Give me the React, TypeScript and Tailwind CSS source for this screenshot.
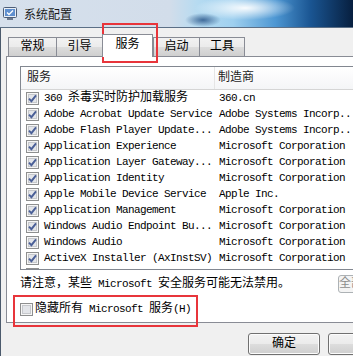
import React from "react";

interface Service {
  name: string;
  maker: string;
}

const services: Service[] = [
  { name: "360 杀毒实时防护加载服务", maker: "360.cn" },
  { name: "Adobe Acrobat Update Service", maker: "Adobe Systems Incorp.." },
  { name: "Adobe Flash Player Update...", maker: "Adobe Systems Incorp.." },
  { name: "Application Experience", maker: "Microsoft Corporation" },
  { name: "Application Layer Gateway...", maker: "Microsoft Corporation" },
  { name: "Application Identity", maker: "Microsoft Corporation" },
  { name: "Apple Mobile Device Service", maker: "Apple Inc." },
  { name: "Application Management", maker: "Microsoft Corporation" },
  { name: "Windows Audio Endpoint Bu...", maker: "Microsoft Corporation" },
  { name: "Windows Audio", maker: "Microsoft Corporation" },
  { name: "ActiveX Installer (AxInstSV)", maker: "Microsoft Corporation" },
];

const tabs = ["常规", "引导", "服务", "启动", "工具"];

// SimSun-like mix: ascii runs are 6px per char, CJK runs 12px
const Mixed = ({ text }: { text: string }) => (
  <>
    {text.split(/([\u3000-\u303f\u4e00-\u9fff\uff00-\uffef]+)/).map((part, i) =>
      /[\u3000-\u303f\u4e00-\u9fff\uff00-\uffef]/.test(part) ? (
        <span key={i} className="text-[12px] tracking-normal">
          {part}
        </span>
      ) : (
        <span key={i}>{part}</span>
      )
    )}
  </>
);

const CheckBox = ({ checked }: { checked: boolean }) => (
  <svg width="13" height="13" viewBox="0 0 13 13" className="shrink-0">
    <rect x="0.5" y="0.5" width="12" height="12" fill="#f6f6f6" stroke="#8e8f8f" />
    <rect x="2.5" y="2.5" width="8" height="8" fill="#e3e5e9" stroke="#c6c8cc" />
    {checked && (
      <path d="M3 6.6 L5.4 9.2 L10 3.4" fill="none" stroke="#4a5f97" strokeWidth="1.9" />
    )}
  </svg>
);

const AppIcon = () => (
  <svg width="14" height="13" viewBox="0 0 14 13">
    <rect x="0.5" y="0.5" width="13" height="10" rx="1" fill="#e8eef6" stroke="#4d5e78" />
    <rect x="2" y="2" width="10" height="7" fill="#5f8fcf" />
    <path d="M4 5.5 L6 7.5 L10 3.5" fill="none" stroke="#ffffff" strokeWidth="1.3" />
    <rect x="4" y="11" width="6" height="2" fill="#6b7a90" />
  </svg>
);

const winButton =
  "h-[22px] rounded-[3px] border border-[#707070] bg-[linear-gradient(to_bottom,#f2f2f2_0%,#ebebeb_50%,#dddddd_50%,#cfcfcf_100%)] shadow-[inset_0_0_0_1px_#fcfcfc] flex items-center justify-center shrink-0";

export default function App() {
  return (
    <div className="w-[353px] h-[356px] relative overflow-hidden bg-[#f0f0f0] text-black font-['Liberation_Mono','Noto_Sans_CJK_SC',monospace] text-[11px] tracking-[-0.6px]">
      {/* title bar */}
      <div className="h-[28px] flex items-center pl-[3px] gap-[7px] border-b border-[#5b6f86] bg-[radial-gradient(ellipse_50px_12px_at_245px_8px,rgba(255,255,255,0.95),rgba(255,255,255,0)),radial-gradient(ellipse_18px_7px_at_203px_20px,rgba(25,70,125,0.75),rgba(25,70,125,0)),linear-gradient(to_right,#d6e0ec_0%,#d2ddea_48%,#b6dbf1_56%,#9fd0ef_66%,#4d97d3_78%,#1a5592_88%,#071f3f_100%)]">
        <AppIcon />
        <span className="text-[12px] tracking-normal text-[#1a1a1a] font-['Noto_Sans_CJK_SC',sans-serif]">
          系统配置
        </span>
      </div>

      <div className="flex h-[328px]">
        {/* window frame */}
        <div className="w-[3px] bg-[#c7d4e3] border-r border-[#4b5a6c]" />

        <div className="flex-1 flex flex-col">
          {/* tab strip */}
          <div className="h-[28px] flex items-end pl-[7px]">
            {tabs.map((tab, i) =>
              tab === "服务" ? (
                <div
                  key={tab}
                  className="relative z-10 w-[51px] h-[23px] -mb-[1px] bg-white border border-b-0 border-[#898c95] flex items-start justify-center pt-[2px] leading-[16px] text-[12px] tracking-normal"
                >
                  {tab}
                </div>
              ) : (
                <div
                  key={tab}
                  className={`${i === 0 ? "w-[48px]" : "w-[46px]"} h-[19px] border-l border-t border-[#898c95] ${i === tabs.length - 1 ? "border-r" : ""} bg-[linear-gradient(to_bottom,#f2f2f2_0%,#ebebeb_50%,#dddddd_50%,#cfcfcf_100%)] flex items-center justify-center text-[12px] tracking-normal leading-[16px]`}
                >
                  {tab}
                </div>
              )
            )}
          </div>

          {/* tab panel */}
          <div className="ml-[5px] w-[380px] h-[267px] border border-[#898c95] bg-white pl-[13px] pt-[9px] flex flex-col">
            <div className="w-[360px] h-[204px] border border-[#828790] overflow-hidden flex flex-col">
              <div className="h-[23px] shrink-0 flex items-center border-b border-[#d5d5d5] bg-[linear-gradient(to_bottom,#ffffff,#f4f5f7)] text-[12px] tracking-normal text-[#1e1e1e]">
                <div className="w-[194px] pl-[6px] border-r border-[#e5e5e5] h-full flex items-center">服务</div>
                <div className="pl-[3px]">制造商</div>
              </div>
              {services.map((s) => (
                <div key={s.name} className="h-[16px] shrink-0 flex items-center whitespace-nowrap leading-[16px]">
                  <div className="w-[198px] pl-[5px] flex items-center gap-[5px] overflow-hidden">
                    <CheckBox checked />
                    <span>
                      <Mixed text={s.name} />
                    </span>
                  </div>
                  <span>{s.maker}</span>
                </div>
              ))}
              {/* next row, only the top of its box shows */}
              <div className="h-[16px] shrink-0 flex items-center pl-[5px]">
                <CheckBox checked />
              </div>
            </div>

            <div className="mt-[5px] h-[18px] flex items-center whitespace-nowrap leading-[14px]">
              <div className="w-[318px] shrink-0">
                <Mixed text="请注意，某些 Microsoft 安全服务可能无法禁用。" />
              </div>
              <div className="h-[18px] w-[80px] rounded-[3px] border border-[#adb2b5] bg-[#f4f4f4] flex items-center justify-center text-[#8d8d8d]">
                <Mixed text="全部启用(E)" />
              </div>
            </div>

            <div className="mt-[9px] h-[14px] flex items-center gap-[2px] whitespace-nowrap leading-[14px]">
              <CheckBox checked={false} />
              <span>
                <Mixed text="隐藏所有 Microsoft 服务(H)" />
              </span>
            </div>
          </div>

          {/* dialog buttons */}
          <div className="mt-[10px] flex gap-[8px] pl-[247px]">
            <div className={`${winButton} w-[72px] text-[12px] tracking-normal`}>确定</div>
            <div className={`${winButton} w-[75px] text-[12px] tracking-normal`}>取消</div>
          </div>
        </div>
      </div>

      {/* red highlight marks */}
      <div className="absolute left-[102px] top-[23px] w-[56px] h-[40px] border-[2px] border-[#e8353b]" />
      <div className="absolute left-[13px] top-[295px] w-[185px] h-[32px] border-[2px] border-[#e8353b]" />
    </div>
  );
}
